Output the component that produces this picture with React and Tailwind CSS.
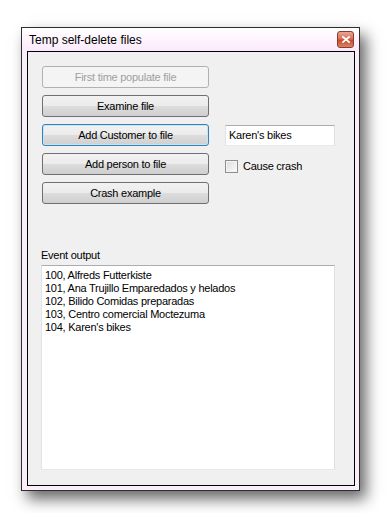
import { useState } from 'react';

function WinButton({ label, disabled, focused }) {
  const border = disabled
    ? 'border-[#adb2b5]'
    : focused
    ? 'border-[#3c7fb1] shadow-[inset_0_0_0_1px_#c4e5f6]'
    : 'border-[#707070]';
  const bg = disabled
    ? 'bg-[#f4f4f4] text-[#a0a0a0]'
    : 'bg-[linear-gradient(#f2f2f2_0%,#ebebeb_50%,#dddddd_50%,#cfcfcf_100%)] text-black';
  return (
    <button
      className={`w-[167px] h-[22px] rounded-[3px] border flex items-center justify-center text-[11px] leading-none tracking-[-0.25px] ${border} ${bg}`}
    >
      {label}
    </button>
  );
}

export default function App() {
  const [crash, setCrash] = useState(false);
  const lines = [
    '100, Alfreds Futterkiste',
    '101, Ana Trujillo Emparedados y helados',
    '102, Bilido Comidas preparadas',
    '103, Centro comercial Moctezuma',
    "104, Karen's bikes",
  ];

  return (
    <div className="w-[386px] h-[513px] bg-white pt-[27px] pl-[21px] font-['Liberation_Sans',Arial,sans-serif]">
      {/* Window frame */}
      <div className="w-[339px] h-[464px] border border-[#2e2e2e] bg-[#f9eef9] flex flex-col shadow-[6px_8px_14px_rgba(0,0,0,0.6)]">
        {/* Title bar */}
        <div className="h-[23px] flex items-center justify-between pl-[7px] pr-[5px] bg-[linear-gradient(#ffffff,#fbe9fb)]">
          <span className="text-[12px] text-black">Temp self-delete files</span>
          <div className="w-[17px] h-[17px] rounded-[3px] border border-[#8a3a30] bg-[linear-gradient(#eaa594_0%,#d9705a_45%,#c84a2c_55%,#db8466_100%)] flex items-center justify-center">
            <svg width="8" height="7" viewBox="0 0 8 7">
              <path d="M1 1 L7 6 M7 1 L1 6" stroke="#fff" strokeWidth="1.8" strokeLinecap="square" />
            </svg>
          </div>
        </div>

        {/* Client area */}
        <div className="ml-[5px] mr-[4px] mb-[4px] flex-1 border border-black bg-[#f0f0f0] pt-[14px] pl-[14px] flex flex-col text-[11px] text-black tracking-[-0.25px]">
          <div className="flex flex-col gap-[7px]">
            <WinButton label="First time populate file" disabled />
            <WinButton label="Examine file" />
            <div className="flex items-center">
              <WinButton label="Add Customer to file" focused />
              <div className="ml-[16px] w-[110px] h-[21px] border border-[#abadb3] border-l-[#e2e3ea] border-r-[#dbdfe6] border-b-[#e3e9ef] bg-white flex items-center pl-[3px]">
                Karen's bikes
              </div>
            </div>
            <div className="flex items-center">
              <WinButton label="Add person to file" />
              <label className="ml-[16px] flex items-center gap-[5px] mt-[4px]">
                <span
                  onClick={() => setCrash(!crash)}
                  className="w-[13px] h-[13px] border border-[#8e8f8f] bg-[linear-gradient(135deg,#dcdcdc,#fbfbfb)] shadow-[inset_0_0_0_1px_#f4f4f4]"
                />
                <span>Cause crash</span>
              </label>
            </div>
            <WinButton label="Crash example" />
          </div>

          <div className="mt-[46px] ml-[-1px] leading-none">Event output</div>
          <div className="mt-[4px] ml-[-1px] w-[294px] h-[205px] border border-[#abadb3] border-l-[#e2e3ea] border-r-[#dbdfe6] border-b-[#e3e9ef] bg-white pl-[3px] pt-[3px] leading-[13px]">
            {lines.map((l, i) => (
              <div key={i}>{l}</div>
            ))}
          </div>
        </div>
      </div>
    </div>
  );
}
